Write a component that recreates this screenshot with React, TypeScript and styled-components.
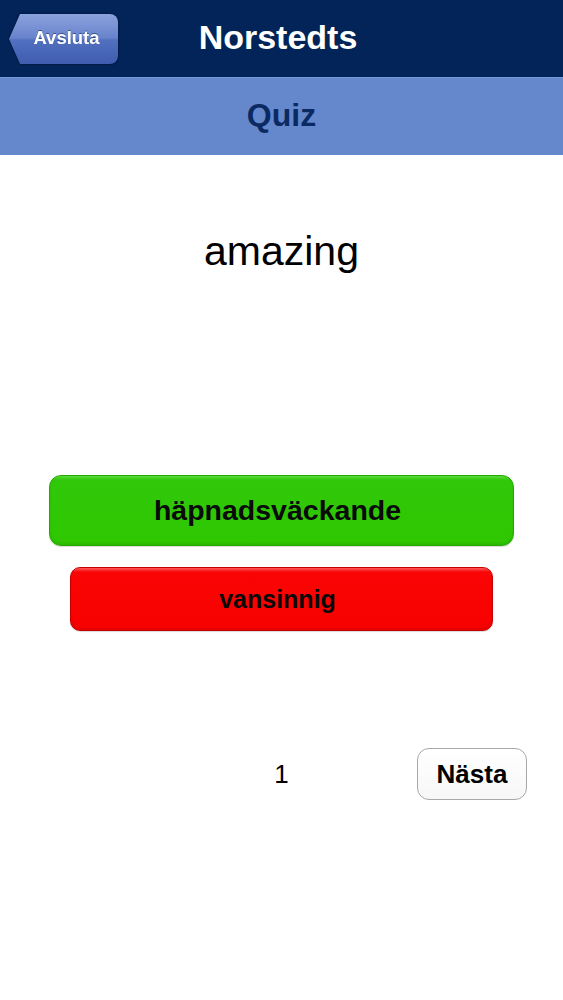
import styled, { createGlobalStyle } from "styled-components";

const GlobalStyle = createGlobalStyle`
  html, body {
    margin: 0;
    padding: 0;
    background: #fff;
    font-family: "Liberation Sans", Arial, Helvetica, sans-serif;
  }
`;

const Screen = styled.div`
  width: 563px;
  min-height: 1000px;
  display: flex;
  flex-direction: column;
  background: #fff;
`;

const NavBar = styled.header`
  height: 77px;
  background: #022458;
  display: grid;
  grid-template-columns: 1fr auto 1fr;
  align-items: center;
`;

const BackShadow = styled.div`
  justify-self: start;
  margin-left: 9px;
  filter: drop-shadow(0 0 1px rgba(0, 10, 40, 0.9));
`;

const BackButton = styled.button`
  width: 109px;
  height: 50px;
  border: none;
  padding: 0 0 2px 6px;
  margin: 1px 0 0 0;
  border-radius: 0 8px 8px 0;
  clip-path: polygon(11px 0, 100% 0, 100% 100%, 11px 100%, 0 50%);
  background: linear-gradient(#8aa3dd 0%, #6883cc 48%, #5270c0 52%, #3f5cae 100%);
  color: #fff;
  font-family: inherit;
  font-weight: 700;
  font-size: 18.5px;
  text-shadow: 0 -1px 0 rgba(0, 20, 60, 0.5);
  cursor: pointer;
`;

const Title = styled.h1`
  margin: 0 7px 3px 0;
  color: #fff;
  font-size: 34px;
  font-weight: 700;
  line-height: 40px;
`;

const SubBar = styled.div`
  height: 78px;
  background: #6588cc;
  border-top: 1px solid #7797d6;
  box-sizing: border-box;
  display: flex;
  align-items: center;
  justify-content: center;
`;

const SubTitle = styled.h2`
  margin: 0 0 3px 0;
  color: #0b2a62;
  font-size: 32px;
  font-weight: 700;
  line-height: 38px;
`;

const Content = styled.main`
  display: flex;
  flex-direction: column;
  align-items: center;
  padding-top: 73px;
`;

const Word = styled.div`
  font-size: 41px;
  line-height: 47px;
  color: #000;
  margin-bottom: 200px;
`;

const Answers = styled.div`
  display: flex;
  flex-direction: column;
  align-items: center;
  gap: 21px;
`;

const Answer = styled.button<{ $correct: boolean }>`
  width: ${(p) => (p.$correct ? "465px" : "423px")};
  height: ${(p) => (p.$correct ? "71px" : "64px")};
  border-radius: ${(p) => (p.$correct ? "12px" : "10px")};
  border: 1px solid ${(p) => (p.$correct ? "#27a800" : "#c40000")};
  background: ${(p) =>
    p.$correct
      ? "linear-gradient(#5cdb3a 0px, #30c80a 4px, #2ec700 100%)"
      : "linear-gradient(#ff5a5a 0px, #fa0505 4px, #f80000 100%)"};
  box-shadow: inset 0 -2px 2px rgba(0, 0, 0, 0.08), 0 1px 1px rgba(0, 0, 0, 0.15);
  color: #0a0a0a;
  font-family: inherit;
  font-weight: 700;
  font-size: ${(p) => (p.$correct ? "28.5px" : "25px")};
  display: flex;
  align-items: center;
  justify-content: center;
  padding: 0 8px 0 0;
  cursor: pointer;
`;

const Footer = styled.div`
  width: 100%;
  display: grid;
  grid-template-columns: 1fr auto 1fr;
  align-items: center;
  margin-top: 117px;
  padding-right: 36px;
  box-sizing: border-box;
`;

const Counter = styled.span`
  grid-column: 2;
  font-size: 26px;
  color: #000;
  margin-left: 36px;
`;

const NextButton = styled.button`
  justify-self: end;
  width: 110px;
  height: 52px;
  border: 1.5px solid #a8a8a8;
  border-radius: 12px;
  background: linear-gradient(#ffffff, #f7f7f7);
  color: #000;
  font-family: inherit;
  font-weight: 700;
  font-size: 26px;
  padding: 0;
  cursor: pointer;
`;

export default function App() {
  return (
    <>
      <GlobalStyle />
      <Screen>
        <NavBar>
          <BackShadow>
            <BackButton>Avsluta</BackButton>
          </BackShadow>
          <Title>Norstedts</Title>
          <span />
        </NavBar>
        <SubBar>
          <SubTitle>Quiz</SubTitle>
        </SubBar>
        <Content>
          <Word>amazing</Word>
          <Answers>
            <Answer $correct>häpnadsväckande</Answer>
            <Answer $correct={false}>vansinnig</Answer>
          </Answers>
          <Footer>
            <Counter>1</Counter>
            <NextButton>Nästa</NextButton>
          </Footer>
        </Content>
      </Screen>
    </>
  );
}
